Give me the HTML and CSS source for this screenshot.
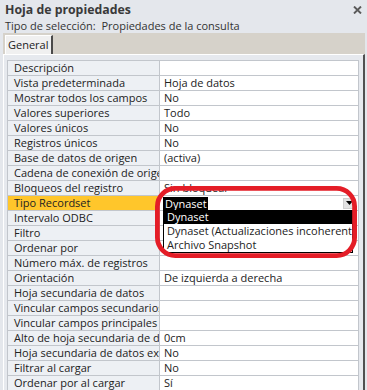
FILE: index.html
```html
<!DOCTYPE html>
<html lang="es">

<head>
    <meta charset="UTF-8">
    <meta name="viewport" content="width=device-width, initial-scale=1.0">
    <title>Hoja de propiedades</title>
    <link rel="stylesheet" href="styles.css">
</head>

<body>
    <div class="title-bar">
        <span class="title">Hoja de propiedades</span>
        <svg class="close" width="9" height="8" viewBox="0 0 9 8">
            <path d="M1 0.5 L8 7.5 M8 0.5 L1 7.5" stroke="#5a5a5a" stroke-width="1.9" fill="none" />
        </svg>
    </div>
    <div class="selection">Tipo de selección:  Propiedades de la consulta</div>

    <div class="tabs">
        <div class="tab">General</div>
    </div>

    <div class="panel">
        <div class="props">
            <div class="label">Descripción</div>
            <div class="value"></div>
            <div class="label">Vista predeterminada</div>
            <div class="value">Hoja de datos</div>
            <div class="label">Mostrar todos los campos</div>
            <div class="value">No</div>
            <div class="label">Valores superiores</div>
            <div class="value">Todo</div>
            <div class="label">Valores únicos</div>
            <div class="value">No</div>
            <div class="label">Registros únicos</div>
            <div class="value">No</div>
            <div class="label">Base de datos de origen</div>
            <div class="value">(activa)</div>
            <div class="label">Cadena de conexión de origen</div>
            <div class="value"></div>
            <div class="label">Bloqueos del registro</div>
            <div class="value">Sin bloquear</div>
            <div class="label active">Tipo Recordset</div>
            <div class="value">
                <div class="combo">
                    <span class="selected">Dynaset</span>
                    <span class="arrow">
                        <svg width="7" height="4" viewBox="0 0 7 4">
                            <path d="M0 0 H7 L3.5 4 Z" fill="#000" />
                        </svg>
                    </span>
                    <div class="list">
                        <div class="item current">Dynaset</div>
                        <div class="item">Dynaset (Actualizaciones incoherentes)</div>
                        <div class="item">Archivo Snapshot</div>
                    </div>
                    <svg class="callout" width="202" height="72" viewBox="0 0 202 72">
                        <rect x="2.4" y="2.4" width="197.2" height="67.2" rx="18" ry="18" fill="none" stroke="#e41d27" stroke-width="4.8" />
                    </svg>
                </div>
            </div>
            <div class="label">Intervalo ODBC</div>
            <div class="value"></div>
            <div class="label">Filtro</div>
            <div class="value"></div>
            <div class="label">Ordenar por</div>
            <div class="value"></div>
            <div class="label">Número máx. de registros</div>
            <div class="value"></div>
            <div class="label">Orientación</div>
            <div class="value">De izquierda a derecha</div>
            <div class="label">Hoja secundaria de datos</div>
            <div class="value"></div>
            <div class="label">Vincular campos secundarios</div>
            <div class="value"></div>
            <div class="label">Vincular campos principales</div>
            <div class="value"></div>
            <div class="label">Alto de hoja secundaria de datos</div>
            <div class="value">0cm</div>
            <div class="label">Hoja secundaria de datos expandida</div>
            <div class="value">No</div>
            <div class="label">Filtrar al cargar</div>
            <div class="value">No</div>
            <div class="label">Ordenar por al cargar</div>
            <div class="value">Sí</div>
        </div>
    </div>
</body>

</html>
```
FILE: styles.css
```css
body {
    margin: 0;
    height: 390px;
    overflow: hidden;
    background-color: #e4e7ec;
    font-family: "Open Sans", sans-serif;
    font-size: 11px;
    color: #222;
}

.title-bar {
    display: flex;
    justify-content: space-between;
    align-items: center;
    height: 19px;
    padding: 0 5px 0 5px;
}

.title {
    font-size: 12.3px;
    font-weight: bold;
    color: #3a3a3a;
}

.close {
    margin-top: 1px;
}

.selection {
    height: 14px;
    line-height: 14px;
    padding-left: 5px;
    white-space: pre;
    color: #333;
}

.tabs {
    display: flex;
    align-items: flex-end;
    height: 21px;
    margin: 0 2px 0 3px;
    padding-left: 2px;
    background-color: #d6d2ca;
}

.tab {
    box-sizing: border-box;
    height: 19px;
    line-height: 17px;
    padding: 0 3px 0 2px;
    background-color: #f0f0f0;
    border-top: 1px solid #fff;
    border-left: 1px solid #fff;
    border-right: 2px solid #4a4a4a;
}

.panel {
    margin: 0 2px 0 3px;
    padding: 5px 4px 0 3px;
    background-color: #e6e9ee;
    border-top: 1px solid #fff;
    border-left: 1px solid #fff;
    border-right: 2px solid #505050;
}

.props {
    display: grid;
    grid-template-columns: 151px 198px;
    grid-auto-rows: 14px;
    gap: 1px;
    background-color: #c2c6cc;
    border: 1px solid #c2c6cc;
}

.label,
.value {
    line-height: 14px;
    white-space: nowrap;
    overflow: hidden;
}

.label {
    padding: 0 1px 0 6px;
    background-color: #edf0f4;
}

.label.active {
    background-color: #ffc62b;
}

.value {
    padding-left: 4px;
    background-color: #fff;
}

.value:has(.combo) {
    padding-left: 0;
    overflow: visible;
}

.combo {
    position: relative;
    display: flex;
    align-items: center;
    height: 14px;
}

.selected {
    margin-left: 3px;
    padding: 0 1px 0 2px;
    line-height: 13px;
    background-color: #000;
    color: #fff;
}

.arrow {
    display: flex;
    align-items: center;
    justify-content: center;
    width: 12px;
    height: 11px;
    margin-left: auto;
    margin-right: 3px;
    background-color: #e2e2e2;
    border: 1px solid #cfcfcf;
    box-sizing: border-box;
}

.list {
    position: absolute;
    left: 3px;
    top: 14px;
    z-index: 1;
    box-sizing: border-box;
    width: 190px;
    background-color: #fff;
    border: 1px solid #000;
    border-top: none;
}

.item {
    height: 14px;
    line-height: 14px;
    padding-left: 3px;
    white-space: nowrap;
    overflow: hidden;
}

.item.current {
    background-color: #000;
    color: #fff;
}

.callout {
    position: absolute;
    left: -5px;
    top: -10px;
    z-index: 2;
    pointer-events: none;
}
```
